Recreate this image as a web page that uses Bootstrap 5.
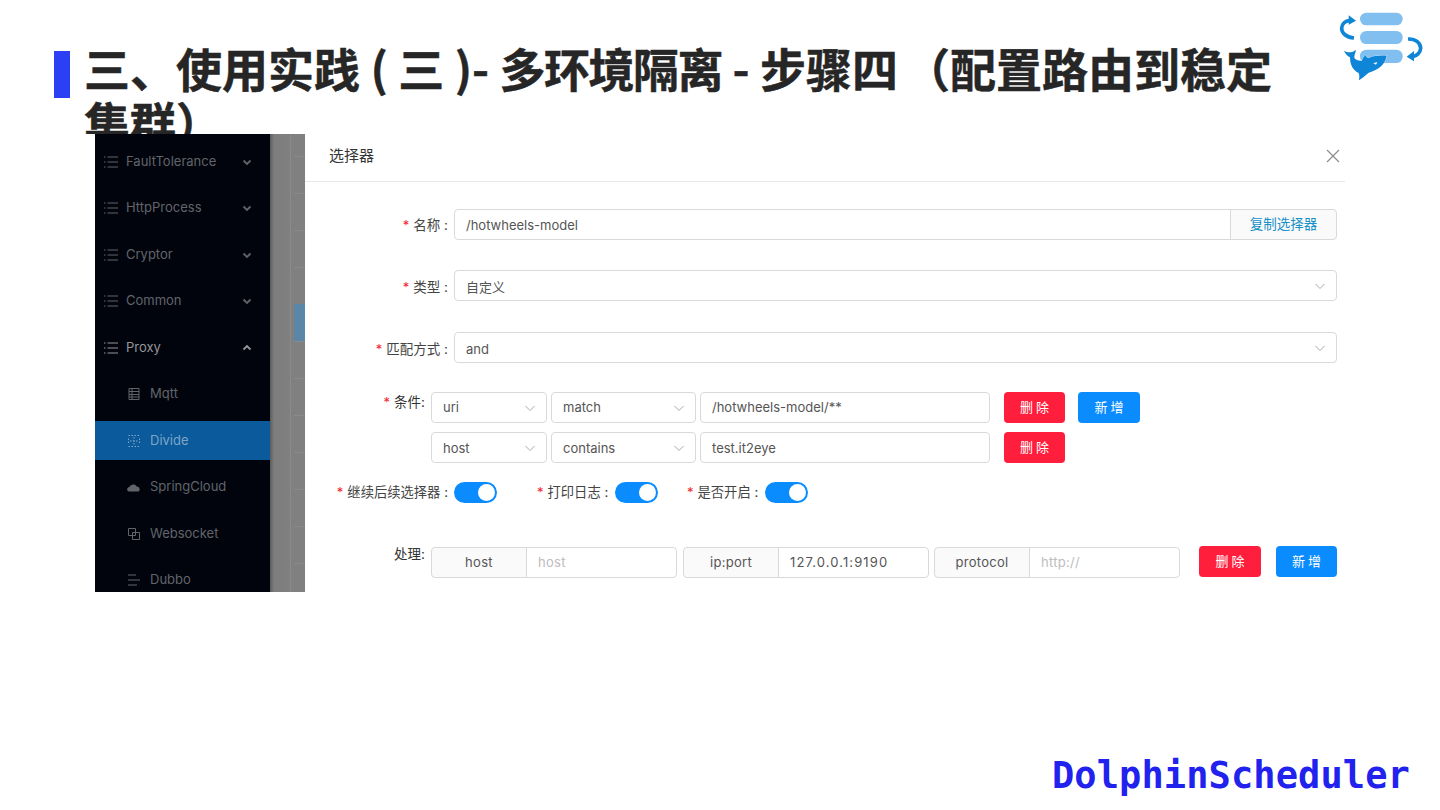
<!DOCTYPE html>
<html lang="zh">
<head>
<meta charset="utf-8">
<title>DolphinScheduler</title>
<link href="https://cdn.jsdelivr.net/npm/bootstrap@5.3.0/dist/css/bootstrap.min.css" rel="stylesheet">
<style>
html,body{margin:0;height:810px;overflow:hidden;background:#fff}
body{font-family:"Inter","Noto Sans CJK SC",sans-serif}
.slide{width:1440px;height:810px}
.slide-head{height:134px;overflow:hidden;padding:40px 18px 0 54px}
.title-bar{width:16px;height:47px;margin-top:11px;background:#2b3ff5;flex:none}
.slide-title{width:1200px;margin:0 0 0 14px;font:700 46px/54px "Noto Sans CJK SC",sans-serif;color:#262626;-webkit-text-stroke:.5px #262626}
.title-tight{letter-spacing:-1.500px}
.title-wide{letter-spacing:6px}
.head-logo{width:120px;height:90px;margin:-40px -18px 0 auto;flex:none}
.shot{width:1250px;height:458px;margin-left:95px;overflow:hidden;flex:none}
.side{width:175px;background:#01040d;padding-top:7.5px;flex:none}
.side-item{height:39px;margin-bottom:7.5px;padding:1px 18px 0 8px;font-size:13px;color:#62646a}
.side-item.lit{color:#94969a}
.side-item.sub{padding-left:31px}
.side-item.sub .side-ico{margin-right:8px}
.side-item.picked{background:#0a5a9c;color:#7fa6c8}
.side-ico{width:16px;height:16px;margin-right:7px;flex:none}
.side-arrow{width:10px;height:10px;margin-left:auto;flex:none}
.dim{width:35px;background:repeating-linear-gradient(180deg,transparent 0 22px,#8a8a8a 22px 23px,transparent 23px 37px) right top/11px 100% no-repeat,linear-gradient(90deg,#5c5c5c 0,#7d7d7d 4px,#808080 20px,#8a8a8a 20px,#8a8a8a 21px,#808080 21px);flex:none}
.dim-block{width:11px;height:37px;margin:170px 0 0 24px;background:#5a87a8}
.sheet{width:1040px;background:#fff;flex:none}
.sheet-head{height:48px;padding:0 5px 3px 24px;border-bottom:1px solid #e8e8e8;font-size:15px;color:#333}
.sheet-x{width:14px;height:14px;margin-left:auto}
.sheet-body{padding:27px 8px 0 0;font-size:13px;color:#555}
.f-row{margin-bottom:30px;height:31px}
.f-row.f-third{margin-top:31px;margin-bottom:29px}
.f-row.f-second{margin-bottom:0}
.f-label{width:143px;text-align:right;padding-top:2px;color:#444;font-size:13.5px;flex:none}
.f-second .f-label{padding-top:4px}
.f-third .f-label{padding-top:3px}
.req{color:#f5222d;margin-right:4px;font-size:13px}
.f-main{margin-left:6px;flex:1 1 auto;min-width:0}
.ctl.form-control,.ctl.form-select{height:31px;padding:0 11px;line-height:29px;font-size:13px;color:#555;border:1px solid #d9d9d9;border-radius:4px;background-color:#fff}
.ctl.form-select{background-image:url("data:image/svg+xml,%3csvg xmlns='http://www.w3.org/2000/svg' viewBox='0 0 12 12'%3e%3cpath fill='none' stroke='%23aaa' d='M1.500 4l4.500 4.500L10.500 4'/%3e%3c/svg%3e");background-size:12px 12px;background-position:right 10px center}
.f-row .ctl{padding-top:1px}
.f-second .ctl.form-select,.f-third .ctl.form-select{padding-top:2px}
.copy-btn.input-group-text{width:107px;height:31px;justify-content:center;font-size:13.5px;color:#1890c8;background:#fafafa;border:1px solid #d9d9d9;border-radius:0 4px 4px 0;padding:0}
.cond-label{width:120px;text-align:right;color:#333;font-size:13.5px;flex:none;line-height:20px}
.cond-wrap{margin-left:6px}
.cond-line{height:31px;margin-bottom:9px}
.cond-line+.cond-line .ctl{padding-top:1px}
.w-a{width:116px;flex:none}.w-b{width:145px;margin-left:4px;flex:none}.w-c{width:290px;margin-left:4px;flex:none}
.act.btn{width:61px;height:31px;padding:0 0 0 3px;font-size:13px;letter-spacing:3px;border:0;border-radius:4px;color:#fff;flex:none}
.act-red.btn{background:#ff1f3d}
.act-blue.btn{background:#0a8cff}
.cond-line .act-red{margin-left:14px}
.cond-line .act-blue{margin-left:13px;width:62px}
.sw-row{height:21px;margin-top:10px}
.sw-label{color:#444;font-size:13.3px;white-space:nowrap}
.sw{width:43px;height:21px;border-radius:11px;background:#0a8cff;flex:none;padding:2px 2px 2px 24px}
.sw-dot{width:17px;height:17px;border-radius:50%;background:#fff}
.sw1{width:143px;text-align:right;flex:none;margin-right:6px}
.sw2{margin-left:40px;margin-right:8px;width:70px;flex:none}
.sw3{margin-left:29px;margin-right:8px;width:70px;flex:none}
.proc{margin-top:44px}
.proc .cond-label{margin-top:-3px}
.proc-grp{width:246px;flex:none}
.proc-grp+.proc-grp{margin-left:6px}
.proc-grp:last-of-type{margin-left:5px}
.proc-grp .input-group-text{width:96px;height:31px;justify-content:center;padding:0;background:#fafafa;border:1px solid #d9d9d9;color:#555;font-size:13px;letter-spacing:.3px;border-radius:4px 0 0 4px}
.proc-grp .ctl{flex:1 1 auto;width:1%;border-radius:0 4px 4px 0;letter-spacing:.3px}
.proc-grp .ctl.digits{letter-spacing:1.1px}
.ph{color:#bdbdbd!important}
.proc .act-red{margin-left:19px;margin-top:-1px;width:62px}
.proc .act-blue{margin-left:15px;margin-top:-1px}
.foot-mark{margin-top:auto;padding:0 30px 10px 0;font:700 37px/48px "DejaVu Sans Mono",monospace;color:#2222ee;letter-spacing:.1px}
</style>
</head>
<body>
<div class="slide d-flex flex-column">
  <header class="slide-head d-flex align-items-start">
    <div class="title-bar"></div>
    <h1 class="slide-title">三、使用实践 ( 三 )- <span class="title-tight">多环境隔离</span> - 步骤<span class="title-wide">四</span>（配置路由到稳定集群）</h1>
    <svg class="head-logo" viewBox="0 0 360 270" aria-hidden="true">
      <rect x="120" y="38" width="128" height="38" rx="19" fill="#80bff0"/>
      <rect x="120" y="93" width="128" height="39" rx="19" fill="#80bff0"/>
      <rect x="120" y="149" width="128" height="40" rx="19" fill="#80bff0"/>
      <path d="M102 114C78 112 64 98 65 84C66 72 76 63 88 62" fill="none" stroke="#0e85d6" stroke-width="11"/>
      <path d="M86 46L108 62L86 74Z" fill="#0e85d6"/>
      <path d="M264 117C288 116 302 130 302 145C301 158 290 168 278 170" fill="none" stroke="#0e85d6" stroke-width="11"/>
      <path d="M282 153L260 170L282 184Z" fill="#0e85d6"/>
      <path d="M72 152C80 157 88 158 96 156C100 155 104 152 108 150C107 158 102 166 103 174C108 180 116 183 126 182C128 174 132 168 138 165C138 170 140 174 146 174C160 168 178 166 200 167C198 178 193 190 184 198C174 208 160 214 146 218C136 226 128 234 117 241C118 232 119 226 116 219C100 212 90 196 90 172C82 168 75 160 72 152Z" fill="#0e85d6" stroke="#fff" stroke-width="2" paint-order="stroke"/>
      <path d="M160 190L172 186L168 194Z" fill="#fff"/>
    </svg>
  </header>

  <main class="shot d-flex">
    <nav class="side">
      <div class="side-item d-flex align-items-center"><svg class="side-ico" viewBox="0 0 16 16"><path d="M1 3h1.500M1 8h1.500M1 13h1.500M4.500 3h10.500M4.500 8h10.500M4.500 13h10.500" stroke="currentColor" fill="none"/></svg>FaultTolerance<svg class="side-arrow" viewBox="0 0 10 10"><path d="M1.500 3.500L5 7l3.500-3.500" stroke="currentColor" stroke-width="1.800" fill="none"/></svg></div>
      <div class="side-item d-flex align-items-center"><svg class="side-ico" viewBox="0 0 16 16"><path d="M1 3h1.500M1 8h1.500M1 13h1.500M4.500 3h10.500M4.500 8h10.500M4.500 13h10.500" stroke="currentColor" fill="none"/></svg>HttpProcess<svg class="side-arrow" viewBox="0 0 10 10"><path d="M1.500 3.500L5 7l3.500-3.500" stroke="currentColor" stroke-width="1.800" fill="none"/></svg></div>
      <div class="side-item d-flex align-items-center"><svg class="side-ico" viewBox="0 0 16 16"><path d="M1 3h1.500M1 8h1.500M1 13h1.500M4.500 3h10.500M4.500 8h10.500M4.500 13h10.500" stroke="currentColor" fill="none"/></svg>Cryptor<svg class="side-arrow" viewBox="0 0 10 10"><path d="M1.500 3.500L5 7l3.500-3.500" stroke="currentColor" stroke-width="1.800" fill="none"/></svg></div>
      <div class="side-item d-flex align-items-center"><svg class="side-ico" viewBox="0 0 16 16"><path d="M1 3h1.500M1 8h1.500M1 13h1.500M4.500 3h10.500M4.500 8h10.500M4.500 13h10.500" stroke="currentColor" fill="none"/></svg>Common<svg class="side-arrow" viewBox="0 0 10 10"><path d="M1.500 3.500L5 7l3.500-3.500" stroke="currentColor" stroke-width="1.800" fill="none"/></svg></div>
      <div class="side-item lit d-flex align-items-center"><svg class="side-ico" viewBox="0 0 16 16"><path d="M1 3h1.500M1 8h1.500M1 13h1.500M4.500 3h10.500M4.500 8h10.500M4.500 13h10.500" stroke="currentColor" fill="none"/></svg>Proxy<svg class="side-arrow" viewBox="0 0 10 10"><path d="M1.500 6.500L5 3l3.500 3.500" stroke="currentColor" stroke-width="1.800" fill="none"/></svg></div>
      <div class="side-item sub d-flex align-items-center"><svg class="side-ico" viewBox="0 0 16 16"><path d="M3 2.500h10v11H3zM3 5.500h10M3 8.500h10M3 11h10M6 2.500v11" stroke="currentColor" fill="none"/></svg>Mqtt</div>
      <div class="side-item sub picked d-flex align-items-center"><svg class="side-ico" viewBox="0 0 16 16"><path d="M2.500 2.500h11M2.500 13.500h11M2.500 5.500v6M13.500 5.500v6M8 4v8M4 8h8" stroke="currentColor" stroke-dasharray="1.500 1.500" fill="none"/></svg>Divide</div>
      <div class="side-item sub d-flex align-items-center"><svg class="side-ico" viewBox="0 0 16 16"><path d="M3 12.500C0.500 12 0.500 8.500 3.500 8C4.500 5 9.500 4.500 10.500 7.500C13.500 7 15 11.500 12.500 12.500Z" fill="currentColor"/></svg>SpringCloud</div>
      <div class="side-item sub d-flex align-items-center"><svg class="side-ico" viewBox="0 0 16 16"><path d="M2.500 2.500h7v7h-7zM6.500 6.500h7v7h-7z" stroke="currentColor" fill="none"/></svg>Websocket</div>
      <div class="side-item sub d-flex align-items-center"><svg class="side-ico" viewBox="0 0 16 16"><path d="M2 3h8M2 8h12M2 13h9" stroke="currentColor" fill="none"/></svg>Dubbo</div>
    </nav>
    <div class="dim"><div class="dim-block"></div></div>
    <section class="sheet">
      <div class="sheet-head d-flex align-items-center">选择器<svg class="sheet-x" viewBox="0 0 14 14"><path d="M1 1l12 12M13 1L1 13" stroke="#8c8c8c" stroke-width="1.200" fill="none"/></svg></div>
      <div class="sheet-body">
        <div class="f-row d-flex align-items-center">
          <div class="f-label"><span class="req">*</span>名称 :</div>
          <div class="f-main input-group">
            <div class="form-control ctl">/hotwheels-model</div>
            <span class="input-group-text copy-btn">复制选择器</span>
          </div>
        </div>
        <div class="f-row f-second d-flex align-items-center">
          <div class="f-label"><span class="req">*</span>类型 :</div>
          <div class="f-main"><div class="form-select ctl">自定义</div></div>
        </div>
        <div class="f-row f-third d-flex align-items-center">
          <div class="f-label"><span class="req">*</span>匹配方式 :</div>
          <div class="f-main"><div class="form-select ctl">and</div></div>
        </div>
        <div class="d-flex">
          <div class="cond-label"><span class="req">*</span>条件:</div>
          <div class="cond-wrap">
            <div class="cond-line d-flex">
              <div class="form-select ctl w-a">uri</div>
              <div class="form-select ctl w-b">match</div>
              <div class="form-control ctl w-c">/hotwheels-model/**</div>
              <button type="button" class="btn act act-red">删除</button>
              <button type="button" class="btn act act-blue">新增</button>
            </div>
            <div class="cond-line d-flex">
              <div class="form-select ctl w-a">host</div>
              <div class="form-select ctl w-b">contains</div>
              <div class="form-control ctl w-c">test.it2eye</div>
              <button type="button" class="btn act act-red">删除</button>
            </div>
          </div>
        </div>
        <div class="sw-row d-flex align-items-center">
          <div class="sw-label sw1"><span class="req">*</span>继续后续选择器 :</div>
          <div class="sw"><div class="sw-dot"></div></div>
          <div class="sw-label sw2"><span class="req">*</span>打印日志 :</div>
          <div class="sw"><div class="sw-dot"></div></div>
          <div class="sw-label sw3"><span class="req">*</span>是否开启 :</div>
          <div class="sw"><div class="sw-dot"></div></div>
        </div>
        <div class="proc d-flex">
          <div class="cond-label">处理:</div>
          <div class="cond-wrap d-flex">
            <div class="input-group proc-grp"><span class="input-group-text">host</span><div class="form-control ctl ph">host</div></div>
            <div class="input-group proc-grp"><span class="input-group-text">ip:port</span><div class="form-control ctl digits">127.0.0.1:9190</div></div>
            <div class="input-group proc-grp"><span class="input-group-text">protocol</span><div class="form-control ctl ph">http://</div></div>
            <button type="button" class="btn act act-red">删除</button>
            <button type="button" class="btn act act-blue">新增</button>
          </div>
        </div>
      </div>
    </section>
  </main>

  <footer class="foot-mark text-end">DolphinScheduler</footer>
</div>
<script src="https://cdn.jsdelivr.net/npm/bootstrap@5.3.0/dist/js/bootstrap.bundle.min.js"></script>
</body>
</html>
